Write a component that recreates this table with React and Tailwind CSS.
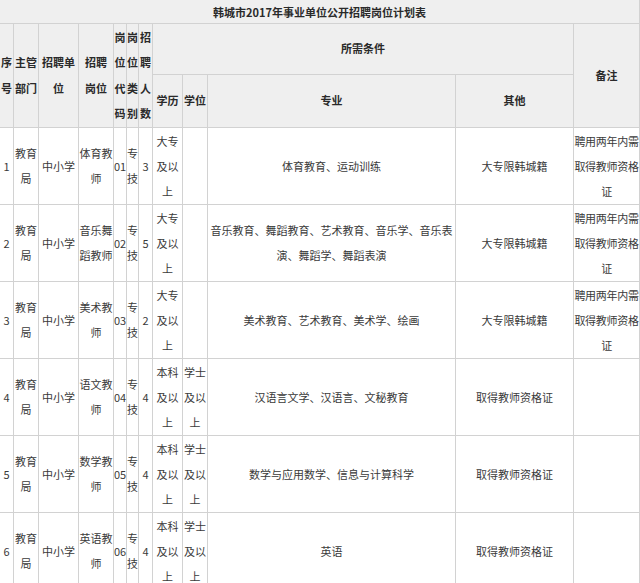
const rows = [
  {
    no: '1', job: ['体育教', '师'], code: '01', num: '3', edu: ['大专', '及以', '上'], deg: [],
    major: ['体育教育、运动训练'], other: '大专限韩城籍', note: ['聘用两年内需', '取得教师资格', '证'],
  },
  {
    no: '2', job: ['音乐舞', '蹈教师'], code: '02', num: '5', edu: ['大专', '及以', '上'], deg: [],
    major: ['音乐教育、舞蹈教育、艺术教育、音乐学、音乐表', '演、舞蹈学、舞蹈表演'], other: '大专限韩城籍',
    note: ['聘用两年内需', '取得教师资格', '证'],
  },
  {
    no: '3', job: ['美术教', '师'], code: '03', num: '2', edu: ['大专', '及以', '上'], deg: [],
    major: ['美术教育、艺术教育、美术学、绘画'], other: '大专限韩城籍', note: ['聘用两年内需', '取得教师资格', '证'],
  },
  {
    no: '4', job: ['语文教', '师'], code: '04', num: '4', edu: ['本科', '及以', '上'], deg: ['学士', '及以', '上'],
    major: ['汉语言文学、汉语言、文秘教育'], other: '取得教师资格证', note: [],
  },
  {
    no: '5', job: ['数学教', '师'], code: '05', num: '4', edu: ['本科', '及以', '上'], deg: ['学士', '及以', '上'],
    major: ['数学与应用数学、信息与计算科学'], other: '取得教师资格证', note: [],
  },
  {
    no: '6', job: ['英语教', '师'], code: '06', num: '4', edu: ['本科', '及以', '上'], deg: ['学士', '及以', '上'],
    major: ['英语'], other: '取得教师资格证', note: [],
  },
];

// stack short pieces one per line, like the narrow cells of the original sheet
const Lines = ({ items }) => items.map((t, i) => <div key={i}>{t}</div>);

const th = 'border border-[#d2d2d2] p-0 text-center align-middle font-bold whitespace-nowrap';
const td = 'border border-[#d2d2d2] p-0 text-center align-middle whitespace-nowrap leading-[25px]';

export default function App() {
  return (
    <div className="w-[640px] h-[583px] overflow-hidden bg-white text-[#3a3a3a] text-[11px] leading-[25.5px] font-['Noto_Sans_CJK_SC',sans-serif]">
      <table className="-ml-px -mt-px w-[640px] table-fixed border-collapse">
        <colgroup>
          <col className="w-[14px]" />
          <col className="w-[25px]" />
          <col className="w-[40px]" />
          <col className="w-[35px]" />
          <col className="w-[13px]" />
          <col className="w-[12px]" />
          <col className="w-[14px]" />
          <col className="w-[30px]" />
          <col className="w-[25px]" />
          <col className="w-[248px]" />
          <col className="w-[118px]" />
          <col className="w-[66px]" />
        </colgroup>
        <thead className="bg-[#efefef] text-[#2a2a2a]">
          <tr className="h-[24px]">
            <th colSpan={12} className={`${th} leading-[20px]`}>韩城市2017年事业单位公开招聘岗位计划表</th>
          </tr>
          <tr className="h-[51px]">
            <th rowSpan={2} className={th}><Lines items={['序', '号']} /></th>
            <th rowSpan={2} className={th}><Lines items={['主管', '部门']} /></th>
            <th rowSpan={2} className={th}><Lines items={['招聘单', '位']} /></th>
            <th rowSpan={2} className={th}><Lines items={['招聘', '岗位']} /></th>
            <th rowSpan={2} className={th}><Lines items={['岗', '位', '代', '码']} /></th>
            <th rowSpan={2} className={th}><Lines items={['岗', '位', '类', '别']} /></th>
            <th rowSpan={2} className={th}><Lines items={['招', '聘', '人', '数']} /></th>
            <th colSpan={4} className={th}>所需条件</th>
            <th rowSpan={2} className={th}>备注</th>
          </tr>
          <tr className="h-[53px]">
            <th className={th}>学历</th>
            <th className={th}>学位</th>
            <th className={th}>专业</th>
            <th className={th}>其他</th>
          </tr>
        </thead>
        <tbody>
          {rows.map((r) => (
            <tr key={r.no} className="h-[77px]">
              <td className={td}>{r.no}</td>
              <td className={td}><Lines items={['教育', '局']} /></td>
              <td className={td}>中小学</td>
              <td className={td}><Lines items={r.job} /></td>
              <td className={td}>{r.code}</td>
              <td className={td}><Lines items={['专', '技']} /></td>
              <td className={td}>{r.num}</td>
              <td className={td}><Lines items={r.edu} /></td>
              <td className={td}><Lines items={r.deg} /></td>
              <td className={td}><Lines items={r.major} /></td>
              <td className={td}>{r.other}</td>
              <td className={`${td} tracking-[-0.3px]`}><Lines items={r.note} /></td>
            </tr>
          ))}
        </tbody>
      </table>
    </div>
  );
}
